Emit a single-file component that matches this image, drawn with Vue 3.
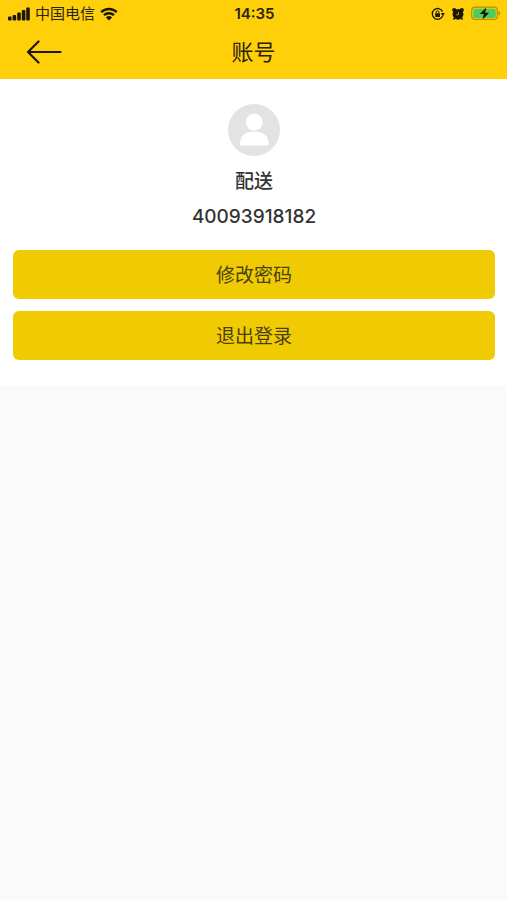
<template>
  <div class="page">
    <header class="header">
      <!-- Status bar -->
      <div class="status-bar">
        <div class="status-left">
          <svg class="signal" viewBox="0 0 22 14" aria-hidden="true">
            <rect x="0" y="9.6" width="3.6" height="3.8" rx="1" />
            <rect x="4.6" y="8" width="3.6" height="5.4" rx="1" />
            <rect x="9.2" y="5.6" width="3.6" height="7.8" rx="1" />
            <rect x="13.8" y="3" width="3.6" height="10.4" rx="1" />
            <rect x="18.2" y="0.4" width="3.6" height="13" rx="1" />
          </svg>
          <span class="carrier">{{ status.carrier }}</span>
          <svg class="wifi" viewBox="0 0 18 14" aria-hidden="true">
            <path d="M1.2 5.2a11.2 11.2 0 0 1 15.6 0" />
            <path d="M4 8.2a7.2 7.2 0 0 1 10 0" />
            <path class="solid" d="M9 13.6 5.9 10.4a4.5 4.5 0 0 1 6.2 0z" />
          </svg>
        </div>
        <span class="time">{{ status.time }}</span>
        <div class="status-right">
          <svg class="lock" viewBox="0 0 14 14" aria-hidden="true">
            <path class="ring" d="M11.9 8.4A5.4 5.4 0 1 1 11.6 4.6" />
            <path d="M9.8 6h4.1L12 9z" />
            <rect x="4.2" y="6.3" width="4.8" height="3.6" rx="0.5" />
            <path class="shackle" d="M5.2 6.5V5.3a1.4 1.4 0 0 1 2.8 0v1.2" />
          </svg>
          <svg class="alarm" viewBox="0 0 14 14" aria-hidden="true">
            <circle cx="7" cy="7.3" r="5.4" />
            <circle cx="3.2" cy="3" r="2.1" />
            <circle cx="10.8" cy="3" r="2.1" />
            <path class="leg" d="M3.6 11 2.4 12.6M10.4 11l1.2 1.6" />
            <path class="hands" d="M7.4 5v2.8H5.2" />
          </svg>
          <svg class="battery" viewBox="0 0 30 15" aria-hidden="true">
            <rect class="case" x="0.7" y="1.2" width="25.6" height="12.2" rx="3.4" />
            <rect class="charge" x="2.2" y="2.7" width="22.6" height="9.2" rx="2" />
            <path class="cap" d="M27.4 5c2.4.7 2.4 3.9 0 4.6z" />
            <path class="bolt" d="M15.2 1.6 8.8 8.1h4l-1.2 5.4 6.6-6.8h-4z" />
          </svg>
        </div>
      </div>

      <!-- Navigation -->
      <nav class="nav">
        <button type="button" class="back-btn" aria-label="返回">
          <svg viewBox="0 0 36 24" aria-hidden="true">
            <path d="M12.5 1.5 2 12l10.5 10.5M2 12h32.5" />
          </svg>
        </button>
        <h1>账号</h1>
      </nav>
    </header>

    <main class="account">
      <svg class="avatar" viewBox="0 0 52 52" aria-hidden="true">
        <circle class="avatar-bg" cx="26" cy="26" r="26" />
        <circle cx="26.3" cy="18.2" r="8.4" />
        <path d="M12 39.5c0-7.6 5.6-12 14.3-12s14.3 4.4 14.3 12c0 1.4-.6 2-2 2H14c-1.4 0-2-.6-2-2z" />
      </svg>
      <p class="name">{{ user.name }}</p>
      <p class="number">{{ user.number }}</p>

      <div class="actions">
        <button v-for="action in actions" :key="action" type="button" class="action-btn">
          {{ action }}
        </button>
      </div>
    </main>
  </div>
</template>

<script setup>
import { reactive } from 'vue'

const status = reactive({
  carrier: '中国电信',
  time: '14:35'
})

const user = reactive({
  name: '配送',
  number: '40093918182'
})

const actions = ['修改密码', '退出登录']
</script>

<style>
body {
  margin: 0;
  background: #fafafa;
}
</style>

<style scoped>
.page {
  min-height: 100vh;
  background: #fafafa;
  color: #333;
  font-family: Inter, "Noto Sans CJK SC", sans-serif;
}

/* Header */
.header {
  background: #ffcf0a;
  color: #2b2408;
}

.status-bar {
  display: grid;
  grid-template-columns: 1fr auto 1fr;
  align-items: center;
  height: 27px;
  padding: 0 6px 0 8px;
}

.status-left,
.status-right {
  display: flex;
  align-items: center;
}

.status-left {
  gap: 5px;
}

.status-right {
  justify-content: flex-end;
  gap: 6px;
}

.carrier {
  font-size: 15px;
  line-height: 20px;
}

.time {
  font-size: 15px;
  line-height: 20px;
  font-weight: 600;
}

.signal {
  width: 22px;
  height: 14px;
  fill: #1d1804;
}

.wifi {
  width: 18px;
  height: 14px;
  fill: none;
  stroke: #1d1804;
  stroke-width: 2.4;
}

.wifi .solid {
  fill: #1d1804;
  stroke: none;
}

.lock,
.alarm {
  width: 14px;
  height: 14px;
  fill: #1d1804;
}

.lock .ring {
  fill: none;
  stroke: #1d1804;
  stroke-width: 1.3;
}

.lock .shackle {
  fill: none;
  stroke: #1d1804;
  stroke-width: 1;
}

.alarm .leg {
  stroke: #1d1804;
  stroke-width: 1.6;
}

.alarm .hands {
  fill: none;
  stroke: #b8960c;
  stroke-width: 1;
}

.battery {
  width: 30px;
  height: 15px;
}

.battery .case {
  fill: none;
  stroke: #a8940f;
  stroke-width: 1.2;
}

.battery .cap {
  fill: #a8940f;
}

.battery .charge {
  fill: #4fcb5c;
}

.battery .bolt {
  fill: #0d1a08;
}

/* Navigation */
.nav {
  display: grid;
  grid-template-columns: 1fr auto 1fr;
  align-items: center;
  height: 50px;
  padding: 0 26px 2px;
}

.nav h1 {
  margin: 0;
  font-size: 22px;
  line-height: 32px;
  font-weight: 400;
}

.back-btn {
  justify-self: start;
  display: flex;
  padding: 0;
  border: none;
  background: none;
  cursor: pointer;
}

.back-btn svg {
  width: 36px;
  height: 24px;
  fill: none;
  stroke: #1d1804;
  stroke-width: 2.2;
  stroke-linecap: round;
  stroke-linejoin: round;
}

/* Account */
.account {
  display: flex;
  flex-direction: column;
  align-items: center;
  padding: 25px 12px 25px 13px;
  background: #fff;
}

.avatar {
  width: 52px;
  height: 52px;
  fill: #fff;
}

.avatar .avatar-bg {
  fill: #e3e3e3;
}

.name,
.number {
  margin: 0;
  font-size: 19px;
  line-height: 28px;
  font-weight: 500;
}

.name {
  margin-top: 12px;
}

.number {
  margin-top: 7px;
}

.actions {
  display: flex;
  flex-direction: column;
  gap: 12px;
  width: 100%;
  margin-top: 19px;
}

.action-btn {
  width: 100%;
  height: 49px;
  padding: 3px 0 0;
  border: none;
  border-radius: 6px;
  background: #f0cb04;
  color: #4a3f10;
  font-family: inherit;
  font-size: 19px;
  line-height: 28px;
  cursor: pointer;
}
</style>
